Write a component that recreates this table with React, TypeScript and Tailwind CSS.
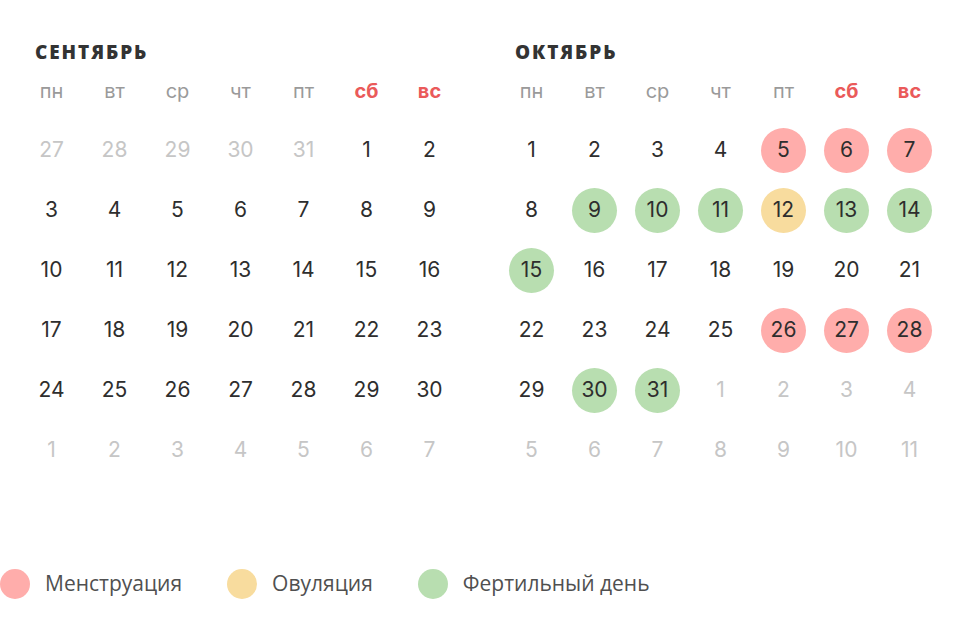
import React from "react"

type Mark = "m" | "o" | "f" | undefined

type Day = {
  n: number
  muted?: boolean
  mark?: Mark
}

const WEEKDAYS = ["пн", "вт", "ср", "чт", "пт", "сб", "вс"]

const markBg: Record<string, string> = {
  m: "bg-[#ffadab]",
  o: "bg-[#f8dc9e]",
  f: "bg-[#b8deb0]",
}

// September: starts Aug 27 (mon)
const september: Day[] = [
  ...[27, 28, 29, 30, 31].map((n) => ({ n, muted: true })),
  ...Array.from({ length: 30 }, (_, i) => ({ n: i + 1 })),
  ...[1, 2, 3, 4, 5, 6, 7].map((n) => ({ n, muted: true })),
]

const octMarks: Record<number, Mark> = {
  5: "m", 6: "m", 7: "m",
  9: "f", 10: "f", 11: "f", 12: "o", 13: "f", 14: "f", 15: "f",
  26: "m", 27: "m", 28: "m",
  30: "f", 31: "f",
}

const october: Day[] = [
  ...Array.from({ length: 31 }, (_, i) => ({ n: i + 1, mark: octMarks[i + 1] })),
  ...[1, 2, 3, 4, 5, 6, 7, 8, 9, 10, 11].map((n) => ({ n, muted: true })),
]

function Month({ title, days }: { title: string; days: Day[] }) {
  return (
    <div className="w-[441px]">
      <div className="h-6 pl-[15px] flex items-center text-[19px] leading-6 font-extrabold tracking-[0.1em] text-[#333] font-['Open_Sans',sans-serif]">
        {title}
      </div>
      <div className="grid grid-cols-7 h-10 mt-[7px] items-center">
        {WEEKDAYS.map((w, i) => (
          <div
            key={w}
            className={
              i >= 5
                ? "text-center text-[20px] font-bold text-[#ea5a5a]"
                : "text-center text-[20px] text-[#9a9a9a]"
            }
          >
            {w}
          </div>
        ))}
      </div>
      <div className="grid grid-cols-7 mt-[9px]">
        {days.map((d, i) => (
          <div key={i} className="h-[60px] flex items-center justify-center">
            <div
              className={
                "w-[45px] h-[45px] rounded-full flex items-center justify-center text-[21px] " +
                (d.mark ? markBg[d.mark] : "") +
                (d.muted ? " text-[#c6c6c6]" : " text-[#2e2e2e]")
              }
            >
              {d.n}
            </div>
          </div>
        ))}
      </div>
    </div>
  )
}

export default function App() {
  return (
    <div className="w-[960px] h-[619px] bg-white font-['Inter',sans-serif] overflow-hidden">
      <div className="flex gap-[39px] pl-5 pt-10">
        <Month title="СЕНТЯБРЬ" days={september} />
        <Month title="ОКТЯБРЬ" days={october} />
      </div>

      {/* Legend */}
      <div className="flex items-center gap-[45px] mt-[88px] font-['Open_Sans',sans-serif] text-[21px] text-[#505050]">
        <div className="flex items-center gap-[15px]">
          <span className="w-[30px] h-[30px] rounded-full bg-[#ffadab]" />
          <span>Менструация</span>
        </div>
        <div className="flex items-center gap-[15px]">
          <span className="w-[30px] h-[30px] rounded-full bg-[#f8dc9e]" />
          <span>Овуляция</span>
        </div>
        <div className="flex items-center gap-[15px]">
          <span className="w-[30px] h-[30px] rounded-full bg-[#b8deb0]" />
          <span>Фертильный день</span>
        </div>
      </div>
    </div>
  )
}
